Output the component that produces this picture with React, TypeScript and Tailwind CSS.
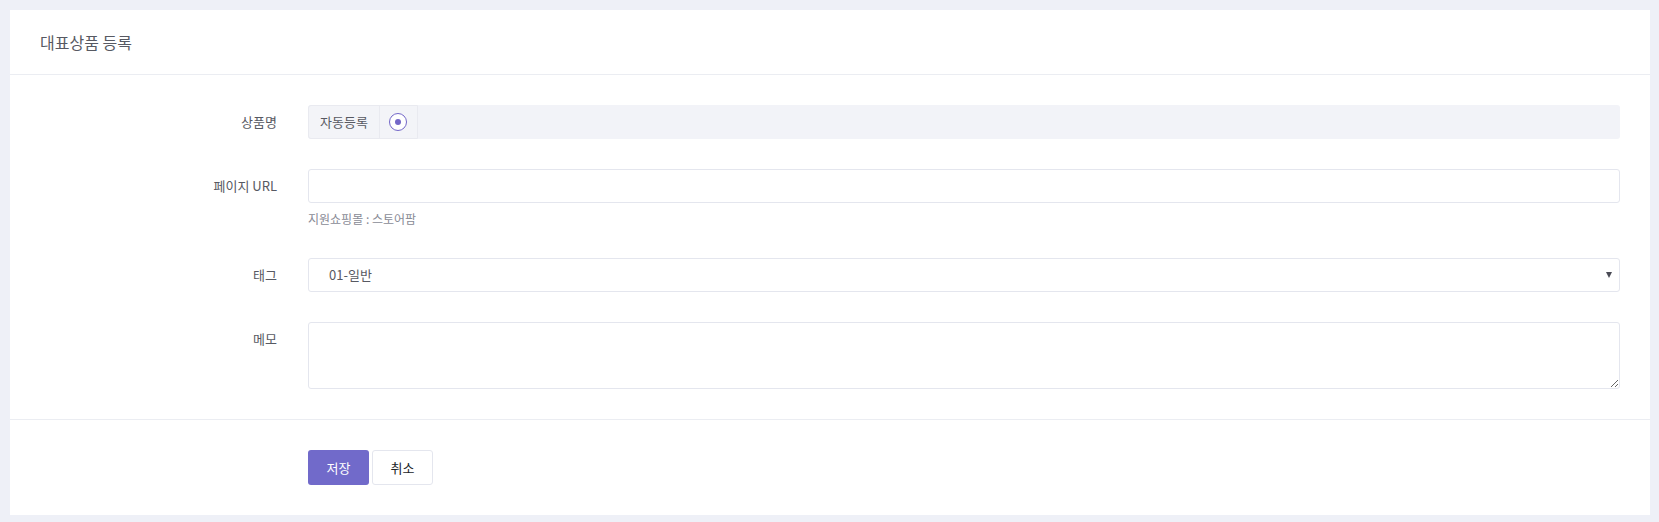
export default function App() {
  const labelCls =
    "w-[267px] shrink-0 h-[34px] flex items-center justify-end text-[13px] text-[#575962]";

  return (
    <div
      className="min-h-[522px] bg-[#eef0f7] pt-[10px] px-[10px] pb-[7px]"
      style={{ fontFamily: '"Noto Sans CJK KR", "Noto Sans", sans-serif' }}
    >
      <div className="bg-white w-[1640px]">
        {/* header */}
        <div className="h-[65px] flex items-center pl-[30px] border-b border-[#ebedf2]">
          <h3 className="text-[16px] text-[#575962] font-normal">대표상품 등록</h3>
        </div>

        {/* body */}
        <div className="pt-[30px] pb-[30px] pr-[30px] flex flex-col gap-[30px]">
          <div className="flex gap-[31px]">
            <label className={labelCls}>상품명</label>
            <div className="flex-1 h-[34px] bg-[#f2f3f8] rounded-[3px] flex">
              <div className="flex items-center border border-[#e9eaf0] rounded-l-[3px] bg-[#f3f4f8]">
                <span className="px-[11px] text-[13px] text-[#575962] border-r border-[#e9eaf0] h-full flex items-center">
                  자동등록
                </span>
                <span className="w-[37px] h-full flex items-center justify-center">
                  <span className="w-[18px] h-[18px] rounded-full border border-[#7367c8] bg-white flex items-center justify-center">
                    <span className="w-[6px] h-[6px] rounded-full bg-[#7367c8]" />
                  </span>
                </span>
              </div>
            </div>
          </div>

          <div className="flex gap-[31px]">
            <label className={labelCls}>페이지 URL</label>
            <div className="flex-1">
              <input
                type="text"
                className="w-full h-[34px] border border-[#e4e6ee] rounded-[3px] px-[12px] text-[13px] outline-none"
              />
              <p className="mt-[7px] text-[12px] leading-[18px] text-[#898b96]">지원쇼핑몰 : 스토어팜</p>
            </div>
          </div>

          <div className="flex gap-[31px]">
            <label className={labelCls}>태그</label>
            <div className="flex-1 h-[34px] border border-[#e4e6ee] rounded-[3px] flex items-center justify-between pl-[20px] pr-[7px]">
              <span className="text-[13px] text-[#575962]">01-일반</span>
              <svg width="6" height="6" viewBox="0 0 6 6">
                <path d="M0 0 H6 L3 6 Z" fill="#4a4b55" />
              </svg>
            </div>
          </div>

          <div className="flex gap-[31px]">
            <label className={labelCls}>메모</label>
            <textarea className="flex-1 h-[67px] border border-[#e4e6ee] rounded-[3px] px-[12px] py-[6px] text-[13px] outline-none" />
          </div>
        </div>

        {/* footer */}
        <div className="border-t border-[#ebedf2] pt-[30px] pb-[30px] pl-[298px] flex gap-[3px]">
          <button className="w-[61px] h-[35px] rounded-[3px] bg-[#716aca] text-white text-[13px]">저장</button>
          <button className="w-[61px] h-[35px] rounded-[3px] border border-[#e4e6ee] bg-white text-[13px] text-[#212529]">
            취소
          </button>
        </div>
      </div>
    </div>
  );
}
